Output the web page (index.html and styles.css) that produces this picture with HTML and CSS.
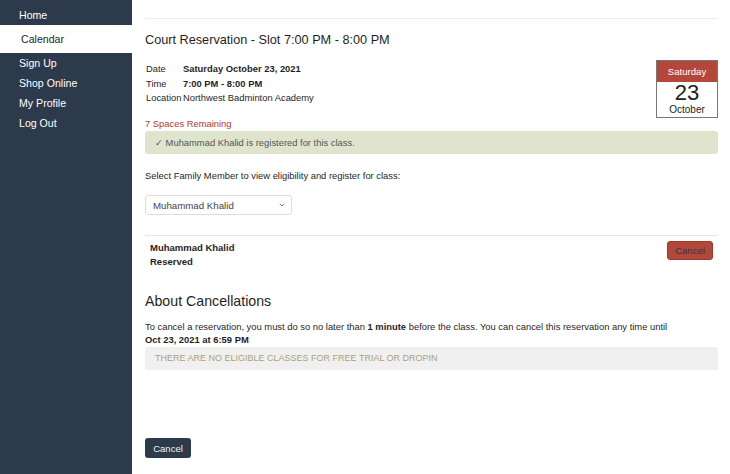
FILE: index.html
```html
<!DOCTYPE html>
<html>
<head>
<meta charset="utf-8">
<link rel="stylesheet" href="styles.css">
</head>
<body>
<div class="page">
  <nav class="sidebar">
    <a class="nav-item">Home</a>
    <a class="nav-item active">Calendar</a>
    <a class="nav-item">Sign Up</a>
    <a class="nav-item">Shop Online</a>
    <a class="nav-item">My Profile</a>
    <a class="nav-item">Log Out</a>
  </nav>
  <main class="main">
    <div class="top-rule"></div>
    <h1 class="title">Court Reservation - Slot 7:00 PM - 8:00 PM</h1>
    <div class="details">
      <div class="info">
        <span class="lbl">Date</span><span class="val">Saturday October 23, 2021</span>
        <span class="lbl">Time</span><span class="val">7:00 PM - 8:00 PM</span>
        <span class="lbl">Location</span><span>Northwest Badminton Academy</span>
      </div>
      <div class="cal">
        <div class="cal-day">Saturday</div>
        <div class="cal-num">23</div>
        <div class="cal-month">October</div>
      </div>
    </div>
    <div class="spaces">7 Spaces Remaining</div>
    <div class="alert">✓ Muhammad Khalid is registered for this class.</div>
    <p class="select-label">Select Family Member to view eligibility and register for class:</p>
    <div class="select">
      <span>Muhammad Khalid</span>
      <svg width="8" height="6" viewBox="0 0 8 6"><path d="M1.8 1.8 L4 4 L6.2 1.8" fill="none" stroke="#777" stroke-width="1"/></svg>
    </div>
    <div class="member">
      <div class="member-info">
        <div>Muhammad Khalid</div>
        <div>Reserved</div>
      </div>
      <button class="btn-red">Cancel</button>
    </div>
    <h2 class="subtitle">About Cancellations</h2>
    <p class="cancel-text">To cancel a reservation, you must do so no later than <b>1 minute</b> before the class. You can cancel this reservation any time until<br><b>Oct 23, 2021 at 6:59 PM</b></p>
    <div class="notice">THERE ARE NO ELIGIBLE CLASSES FOR FREE TRIAL OR DROPIN</div>
    <button class="btn-dark">Cancel</button>
  </main>
</div>
</body>
</html>
```

FILE: styles.css
```css
* { box-sizing: border-box; }
html, body { margin: 0; padding: 0; background: #fff; }
body { font-family: "Liberation Sans", Arial, sans-serif; font-size: 9.4px; color: #1f1f1f; }
.page { display: flex; width: 730px; height: 474px; overflow: hidden; }
.sidebar { width: 132px; flex: none; background: #2c3a4b; padding-top: 5px; display: flex; flex-direction: column; }
.nav-item { display: block; color: #fff; font-size: 10.6px; line-height: 20px; padding-left: 19px; }
.nav-item.active { background: #fff; color: #1f1f1f; line-height: 28px; padding-left: 21px; }
.main { flex: 1; padding: 18px 12px 0 13px; display: flex; flex-direction: column; }
.top-rule { height: 1px; background: #ececec; }
.title { font-size: 12.7px; font-weight: normal; margin: 12px 0 0; line-height: 18px; color: #1f1f1f; }
.details { display: flex; justify-content: space-between; align-items: flex-start; margin-top: 11px; height: 57px; }
.info { display: grid; grid-template-columns: 37px auto; margin-left: 1px; margin-top: 2px; line-height: 14.5px; white-space: nowrap; }
.info .val { font-weight: bold; }
.cal { width: 62px; height: 58px; border: 1px solid #777; text-align: center; margin-top: 0; }
.cal-day { background: #b5473a; color: #fff; font-size: 9.6px; line-height: 21px; }
.cal-num { font-size: 22px; line-height: 22px; color: #222; }
.cal-month { font-size: 10px; line-height: 11px; color: #222; }
.spaces { color: #b5392d; line-height: 13px; }
.alert { background: #dfe5cd; color: #555; border-radius: 3px; height: 23px; line-height: 23px; padding-left: 10px; margin-top: 1px; }
.select-label { margin: 15px 0 0; line-height: 14px; }
.select { width: 147px; height: 20px; border: 1px solid #ddd; border-radius: 3px; margin-top: 12px; display: flex; align-items: center; justify-content: space-between; padding: 0 5px 0 7px; color: #444; font-size: 9.7px; }
.member { border-top: 1px solid #e6e6e6; margin-top: 20px; display: flex; justify-content: space-between; align-items: flex-start; padding: 5px 5px 0 5px; }
.member-info { font-weight: bold; line-height: 14px; font-size: 9.5px; }
.btn-red { background: #b5473a; color: #2c3a4b; font-family: inherit; font-size: 9.5px; border: 1px solid #9a3a2f; border-radius: 3px; width: 46px; height: 19px; padding: 0; }
.subtitle { font-size: 14.2px; font-weight: normal; margin: 23px 0 0; line-height: 18px; }
.cancel-text { margin: 10px 0 0; line-height: 13px; }
.notice { background: #f0f0f0; color: #a9a37c; height: 23px; line-height: 23px; padding-left: 10px; margin-top: 1px; border-radius: 2px; font-size: 9px; }
.btn-dark { background: #2c3a4b; color: #f2f2f2; font-family: inherit; font-size: 9.5px; border: none; border-radius: 3px; width: 46px; height: 20px; padding: 0; margin-top: 68px; align-self: flex-start; }
```
